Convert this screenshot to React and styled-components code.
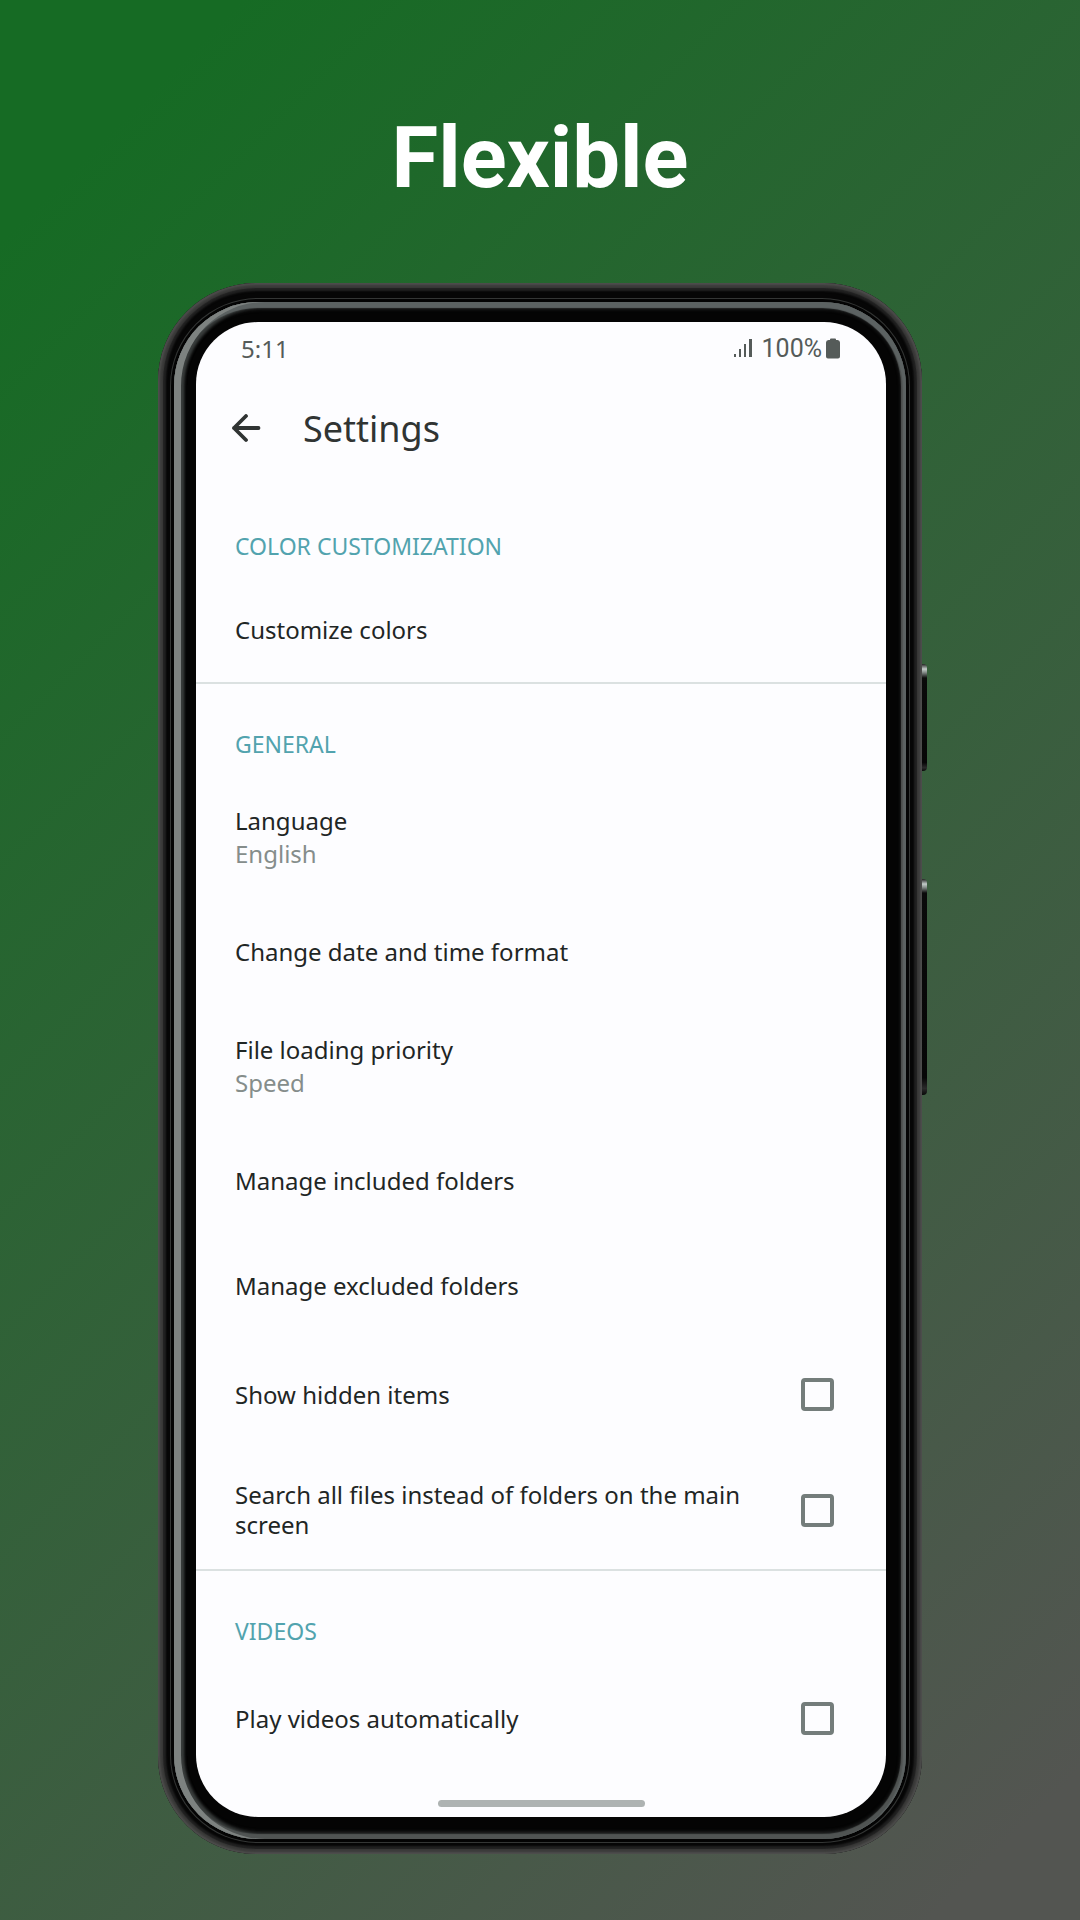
import React, { useState } from 'react';
import styled, { createGlobalStyle, css } from 'styled-components';

const GlobalStyle = createGlobalStyle`
  *, *::before, *::after {
    box-sizing: border-box;
  }

  body {
    margin: 0;
    font-family: 'Noto Sans', 'Open Sans', sans-serif;
  }
`;

const Page = styled.main`
  display: flex;
  flex-direction: column;
  align-items: center;
  min-height: 100vh;
  padding: 108px 24px 67px;
  background: linear-gradient(135deg, #166b24 8%, #535551 95%);
`;

const Headline = styled.h1`
  margin: 0 0 75px;
  color: #fff;
  font-family: Roboto, sans-serif;
  font-size: 85px;
  font-weight: 700;
  line-height: 100px;
`;

const Phone = styled.div`
  position: relative;
  width: 100%;
  max-width: 764px;
  padding: 19px 16px 15px;
  border-radius: 98px;
  background: #060606;
  box-shadow:
    inset 0 0 2px 2px #4d4d4c,
    inset 0 0 1px 5px #3a3a39,
    inset 0 0 2px 8px #212121;
`;

const Rim = styled.div`
  padding: 20px 20px 22px 22px;
  border-radius: 84px;
  background: #040404;
  box-shadow:
    0 0 0 3px #040404,
    0 0 0 4px #343635,
    inset 7px 0 0 0 #7d8280,
    inset 0 3px 1px 3px #5c6262,
    inset 0 0 1px 5px #505453,
    inset 5px 0 3px 5px #3a3e3d,
    inset 2px 0 3px 8px #191a1a;
`;

const SideKey = styled.span`
  position: absolute;
  left: 100%;
  top: ${({ $top }) => $top}px;
  width: 5px;
  height: ${({ $height }) => $height}px;
  border-radius: 0 4px 4px 0;
  background: linear-gradient(#222 0, #c3cbc9 5px, #8d9592 8px, #0a0a0a 14px, #060606 92%, #2a2a2a 97%, #080808);
`;

const Screen = styled.div`
  display: flex;
  flex-direction: column;
  overflow: hidden;
  border-radius: 62px;
  background: #fdfdff;
`;

const StatusBar = styled.div`
  display: flex;
  align-items: center;
  height: 54px;
  padding: 0 46px 2px 45px;
  color: #555b59;
  font-size: 24px;
`;

const Indicators = styled.div`
  display: flex;
  align-items: center;
  gap: 4px;
  margin-left: auto;
  font-family: Roboto, sans-serif;
  font-size: 25px;

  svg:first-child {
    margin-right: 6px;
  }
`;

const Toolbar = styled.header`
  display: flex;
  align-items: center;
  gap: 42px;
  height: 110px;
  padding: 0 35px 5px;
`;

const BackButton = styled.button`
  display: flex;
  padding: 0;
  border: 0;
  background: none;
  color: #303433;
  cursor: pointer;
`;

const ScreenTitle = styled.h2`
  margin: 0;
  color: #303433;
  font-size: 36px;
  font-weight: 400;
  line-height: 48px;
`;

const Section = styled.section`
  & + & {
    border-top: 2px solid #dbe1e1;
  }
`;

const SectionTitle = styled.h3`
  margin: 0;
  padding: 43px 39px 14px;
  color: #52a3ae;
  font-size: 23px;
  font-weight: 400;
  line-height: 34px;
  text-transform: uppercase;
`;

const rowStyle = css`
  display: flex;
  width: 100%;
  padding: 29px 39px;
  border: 0;
  background: none;
  color: #1f2625;
  font-family: inherit;
  font-size: 24px;
  text-align: left;
  cursor: pointer;
`;

const Row = styled.button`
  ${rowStyle}
  flex-direction: column;
  justify-content: center;
  min-height: 105px;
  line-height: 33px;
`;

const Value = styled.span`
  color: #858d8b;
`;

const CheckRow = styled.label`
  ${rowStyle}
  align-items: center;
  justify-content: space-between;
  gap: 40px;
  min-height: 113px;
  padding-right: 52px;
  line-height: 30px;
`;

const Checkbox = styled.input`
  flex: none;
  width: 33px;
  height: 33px;
  margin: 0;
  border: 4px solid #747d7b;
  border-radius: 4px;
  appearance: none;
  cursor: pointer;

  &:checked {
    background: #52a3ae;
    border-color: #52a3ae;
  }
`;

const HomeBar = styled.div`
  width: 30%;
  height: 7px;
  margin: 25px auto 10px;
  border-radius: 4px;
  background: #aeb3b2;
`;

const sections = [
  {
    title: 'Color customization',
    items: [{ label: 'Customize colors' }],
  },
  {
    title: 'General',
    items: [
      { label: 'Language', value: 'English' },
      { label: 'Change date and time format' },
      { label: 'File loading priority', value: 'Speed' },
      { label: 'Manage included folders' },
      { label: 'Manage excluded folders' },
      { label: 'Show hidden items', toggle: true },
      { label: 'Search all files instead of folders on the main screen', toggle: true },
    ],
  },
  {
    title: 'Videos',
    items: [{ label: 'Play videos automatically', toggle: true }],
  },
];

const SignalIcon = () => (
  <svg width="18" height="20" viewBox="0 0 18 20" fill="currentColor" aria-hidden="true">
    <rect x="0" y="16" width="2" height="3" />
    <rect x="5" y="11" width="2" height="8" />
    <rect x="10" y="6" width="2" height="13" />
    <rect x="15" y="1" width="3" height="18" />
  </svg>
);

const BatteryIcon = () => (
  <svg width="14" height="21" viewBox="0 0 14 21" fill="currentColor" aria-hidden="true">
    <path d="M4 2V1.4Q4 .4 5 .4h4q1 0 1 1V2h1.500Q14 2.400 14 4.500V18.500Q14 20.600 12 20.600H2Q0 20.600 0 18.500V4.500Q0 2.400 2.500 2Z" />
  </svg>
);

const BackIcon = () => (
  <svg
    width="30"
    height="30"
    viewBox="0 0 30 30"
    fill="none"
    stroke="currentColor"
    strokeWidth="3.8"
    strokeLinecap="round"
    strokeLinejoin="round"
    aria-hidden="true"
  >
    <path d="M15 2 3 14l12 12M3 14h24.500" />
  </svg>
);

const App = () => {
  const [checked, setChecked] = useState({});

  const toggle = label => setChecked({ ...checked, [label]: !checked[label] });

  return (
    <Page>
      <GlobalStyle />
      <Headline>Flexible</Headline>
      <Phone>
        <SideKey $top={381} $height={107} />
        <SideKey $top={596} $height={216} />
        <Rim>
          <Screen>
            <StatusBar>
              <span>5:11</span>
              <Indicators>
                <SignalIcon />
                <span>100%</span>
                <BatteryIcon />
              </Indicators>
            </StatusBar>
            <Toolbar>
              <BackButton type="button" aria-label="Back">
                <BackIcon />
              </BackButton>
              <ScreenTitle>Settings</ScreenTitle>
            </Toolbar>
            {sections.map(({ title, items }) => (
              <Section key={title}>
                <SectionTitle>{title}</SectionTitle>
                {items.map(item => (item.toggle ? (
                  <CheckRow key={item.label}>
                    <span>{item.label}</span>
                    <Checkbox
                      type="checkbox"
                      checked={!!checked[item.label]}
                      onChange={() => toggle(item.label)}
                    />
                  </CheckRow>
                ) : (
                  <Row key={item.label} type="button">
                    <span>{item.label}</span>
                    {item.value && <Value>{item.value}</Value>}
                  </Row>
                )))}
              </Section>
            ))}
            <HomeBar />
          </Screen>
        </Rim>
      </Phone>
    </Page>
  );
};

export default App;
